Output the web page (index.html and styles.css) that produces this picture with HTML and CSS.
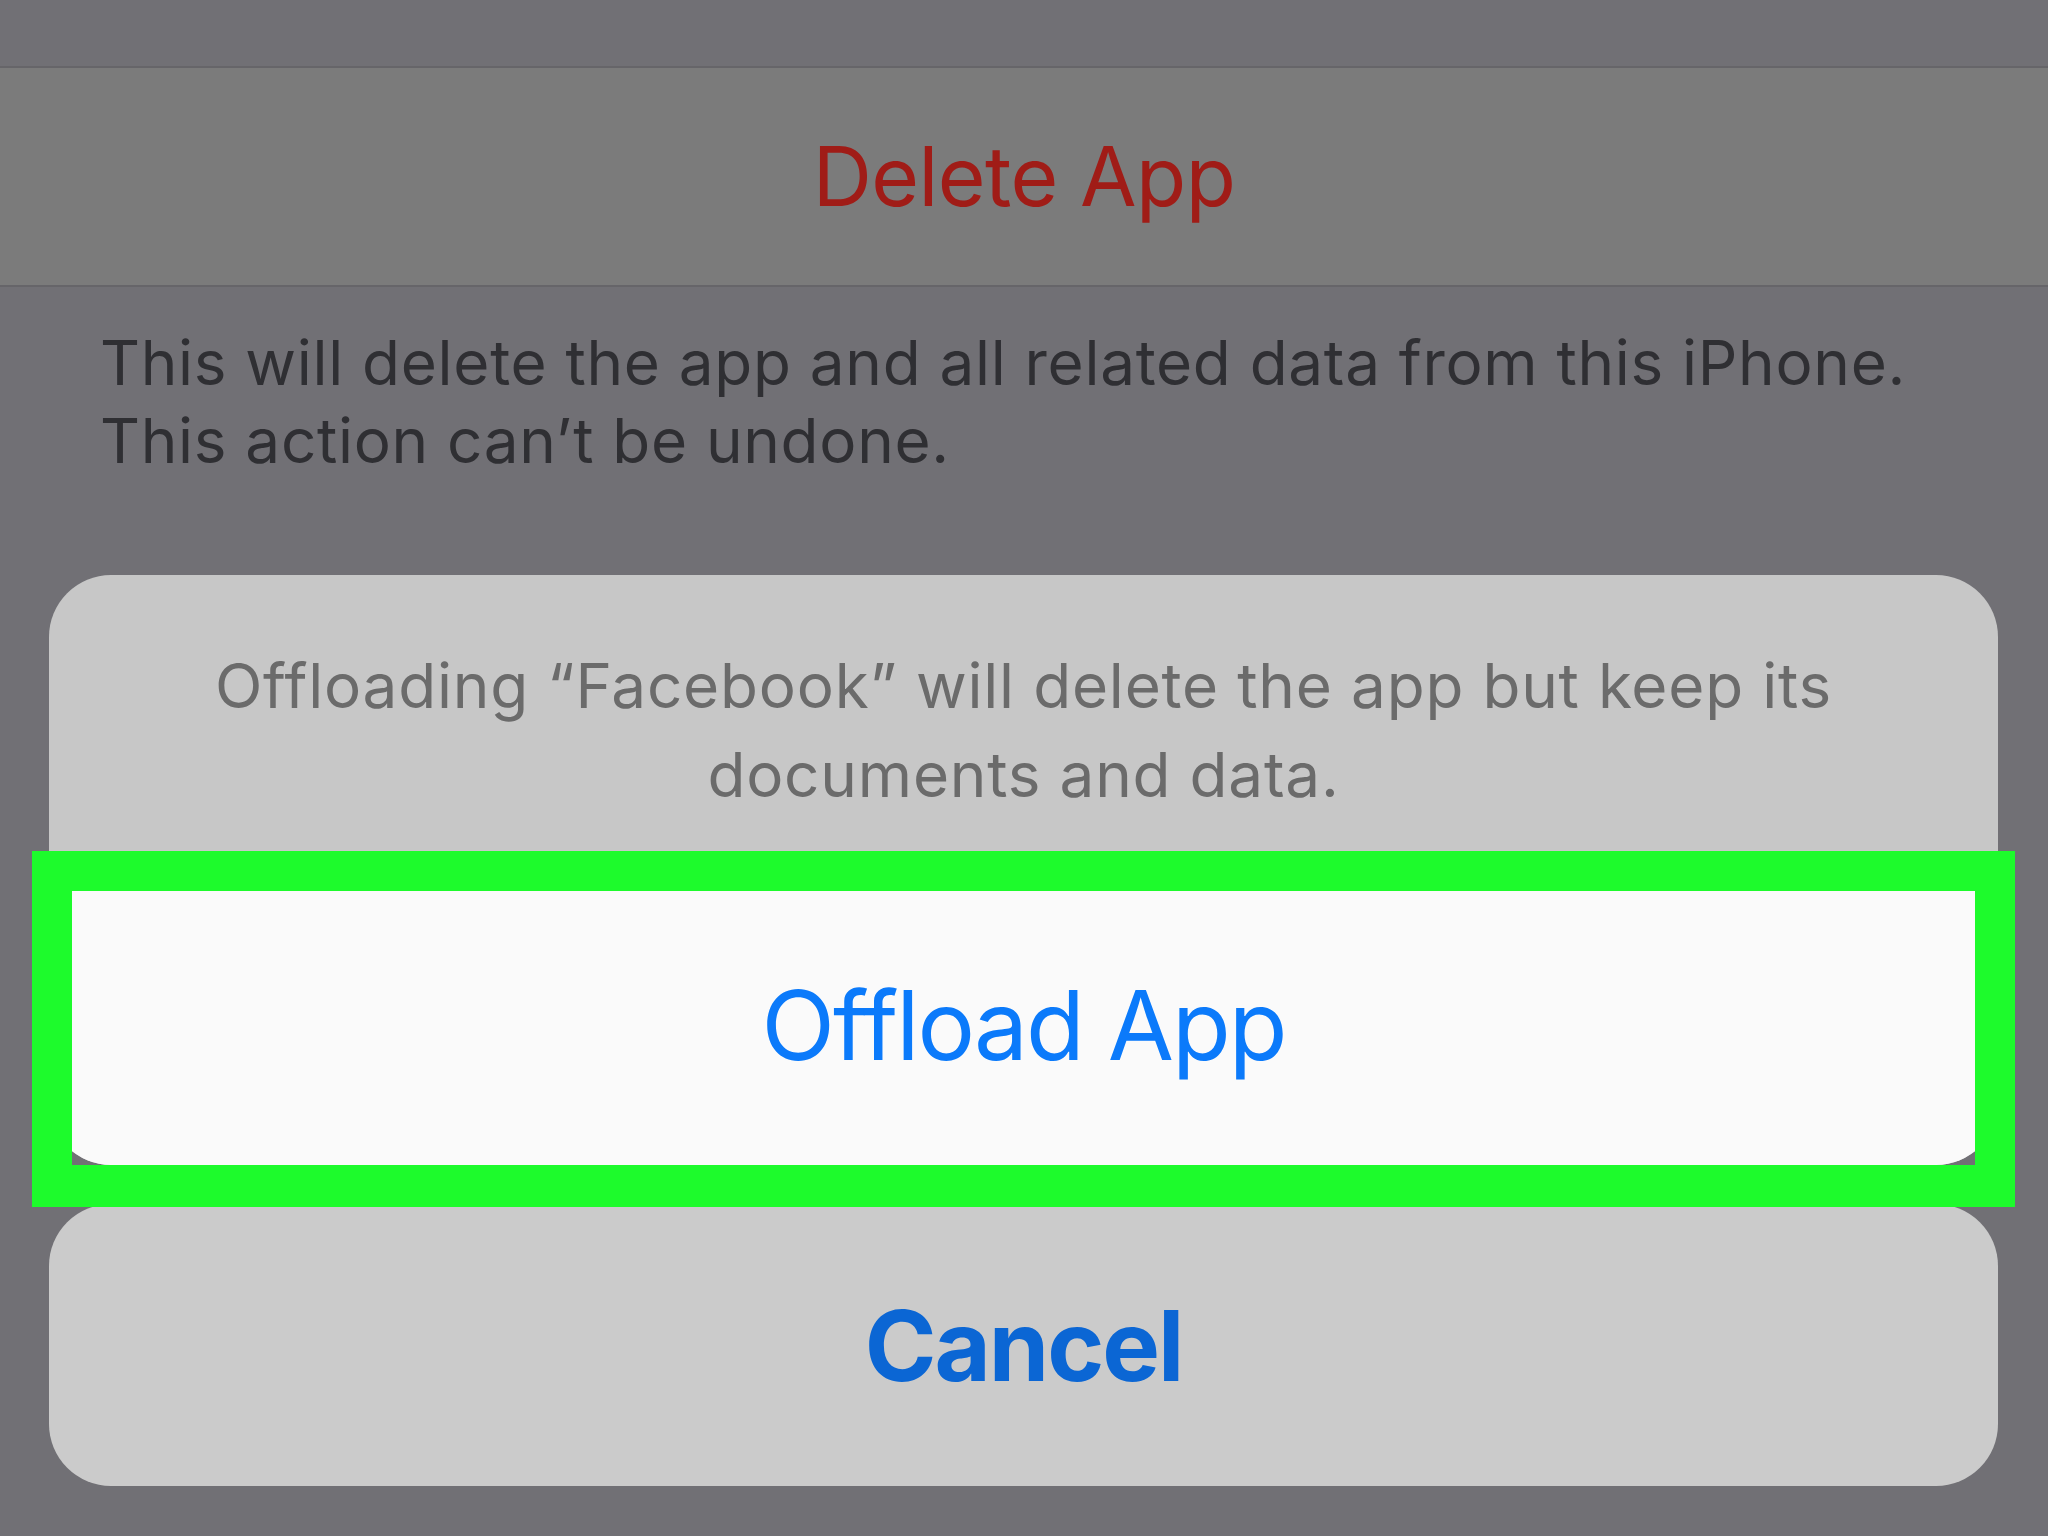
FILE: index.html
```html
<!DOCTYPE html>
<html lang="en">
<head>
  <meta charset="UTF-8">
  <meta name="viewport" content="width=device-width, initial-scale=1.0">
  <title>Offload App</title>
  <link rel="stylesheet" href="styles.css">
</head>
<body>
  <!-- dimmed settings page behind the sheet -->
  <div class="top-bar"></div>
  <div class="delete-row">Delete App</div>
  <p class="delete-note">This will delete the app and all related data from this iPhone.<br>This action can’t be undone.</p>

  <!-- action sheet -->
  <div class="sheet">
    <div class="sheet-group">
      <div class="sheet-message">Offloading “Facebook” will delete the app but keep its<br>documents and data.</div>
      <button class="sheet-button offload">Offload App</button>
    </div>
    <button class="sheet-button cancel">Cancel</button>
  </div>

  <!-- green highlight frame -->
  <div class="highlight"></div>
</body>
</html>
```

FILE: styles.css
```css
body {
  margin: 0;
  width: 2048px;
  height: 1536px;
  overflow: hidden;
  position: relative;
  background-color: #717075;
  font-family: Inter, "Noto Sans", sans-serif;
}

.top-bar {
  height: 66px;
  border-bottom: 2px solid #666569;
}

.delete-row {
  height: 217px;
  background-color: #7b7b7b;
  border-bottom: 2px solid #666569;
  display: flex;
  justify-content: center;
  align-items: center;
  font-size: 82px;
  letter-spacing: -0.6px;
  color: #a01c17;
}

.delete-note {
  margin: 0;
  padding: 37px 0 0 100px;
  font-size: 62px;
  line-height: 78px;
  letter-spacing: 0.7px;
  color: #2f2f33;
}

.sheet {
  margin: 0 50px 0 49px;
  position: absolute;
  top: 575px;
  left: 0;
  right: 0;
}

.sheet-group {
  border-radius: 62px;
  overflow: hidden;
  background-color: #c7c7c7;
}

.sheet-message {
  height: 242px;
  padding-top: 66px;
  text-align: center;
  font-size: 62px;
  line-height: 89px;
  letter-spacing: 0.8px;
  color: #6b6b6b;
}

.sheet-button {
  display: flex;
  justify-content: center;
  align-items: center;
  width: 100%;
  height: 282px;
  border: none;
  padding: 0;
  font-family: inherit;
}

.offload {
  background-color: #fafafa;
  border-top: 1px solid #b5b5b5;
  font-size: 96px;
  letter-spacing: -2px;
  color: #0b7afa;
}

.cancel {
  margin-top: 39px;
  border-radius: 62px;
  background-color: #cbcbcb;
  font-size: 97px;
  font-weight: 700;
  letter-spacing: -2px;
  color: #0b66d4;
}

.highlight {
  position: absolute;
  left: 32px;
  top: 851px;
  width: 1903px;
  height: 274px;
  border: 40px solid #1dfb2c;
  border-bottom-width: 42px;
}
```
